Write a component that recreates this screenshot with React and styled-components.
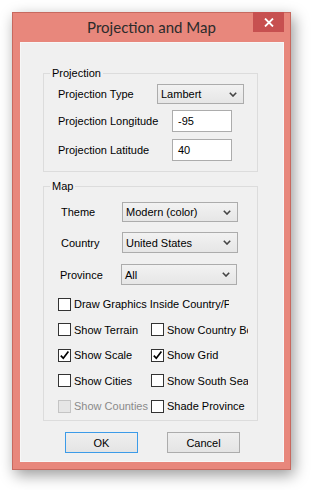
import React from "react";
import styled, { createGlobalStyle } from "styled-components";

const Global = createGlobalStyle`
  html, body { margin: 0; padding: 0; background: #ffffff; }
  body { font-family: "Liberation Sans", Arial, sans-serif; font-size: 11px; color: #000; }
  * { box-sizing: border-box; }
`;

const Page = styled.div`
  padding: 12px 0 0 12px;
  width: 311px;
  height: 490px;
`;

const Window = styled.div`
  width: 279px;
  height: 458px;
  border: 1px solid #c7695f;
  background: #e8877c;
  display: flex;
  flex-direction: column;
  box-shadow: 3px 5px 14px rgba(0, 0, 0, 0.4);
`;

const TitleBar = styled.div`
  height: 29px;
  display: grid;
  grid-template-columns: 37px 1fr 37px;
  align-items: start;
`;

const Title = styled.div`
  grid-column: 2;
  align-self: center;
  text-align: center;
  font-family: Lato, "Liberation Sans", sans-serif;
  font-size: 15px;
  color: #2b2b2b;
  margin-top: -1px;
`;

const CloseButton = styled.div`
  grid-column: 3;
  width: 31px;
  height: 20px;
  margin-top: -1px;
  background: #c75050;
  display: flex;
  align-items: center;
  justify-content: center;
`;

const Client = styled.div`
  margin: 0 6px 7px 7px;
  height: 420px;
  background: #f0f0f0;
  border: 1px solid #f7f7f7;
  padding: 30px 0 0 22px;
  display: flex;
  flex-direction: column;
`;

const Group = styled.div`
  position: relative;
  width: 215px;
  height: ${(p) => p.$h}px;
  margin-bottom: ${(p) => p.$mb || 0}px;
  border: 1px solid #dcdcdc;
  padding: ${(p) => p.$pt}px 0 0 14px;
  display: flex;
  flex-direction: column;
`;

const Legend = styled.span`
  position: absolute;
  top: -8px;
  left: 6px;
  padding: 0 2px;
  background: #f0f0f0;
  line-height: 14px;
`;

const Row = styled.div`
  display: flex;
  align-items: center;
  height: ${(p) => p.$h}px;
  margin-top: ${(p) => p.$mt || 0}px;
  padding-left: ${(p) => p.$indent || 0}px;
`;

const Label = styled.div`
  width: ${(p) => p.$w}px;
  flex: none;
  white-space: nowrap;
`;

const SelectBox = styled.div`
  width: ${(p) => p.$w}px;
  height: 100%;
  border: 1px solid #acacac;
  background: linear-gradient(#f2f2f2, #e6e6e6);
  display: flex;
  align-items: center;
  justify-content: space-between;
  padding: 0 6px 0 3px;
`;

const TextBox = styled.div`
  width: ${(p) => p.$w}px;
  height: 100%;
  border: 1px solid #acacac;
  background: #ffffff;
  display: flex;
  align-items: center;
  padding-left: 5px;
`;

const CheckGrid = styled.div`
  display: flex;
  flex-direction: column;
  gap: 9.5px;
  margin-top: 11px;
`;

const CheckLine = styled.div`
  display: flex;
  height: 16px;
`;

const CheckItem = styled.div`
  width: ${(p) => p.$w}px;
  flex: none;
  display: flex;
  align-items: center;
  gap: 3px;
  overflow: hidden;
  white-space: nowrap;
  color: ${(p) => (p.$disabled ? "#8a8a8a" : "#000")};
`;

const Box = styled.div`
  width: 13px;
  height: 13px;
  flex: none;
  border: 1px solid ${(p) => (p.$disabled ? "#c4c4c4" : "#333333")};
  background: ${(p) => (p.$disabled ? "#e6e6e6" : "#ffffff")};
  display: flex;
  align-items: center;
  justify-content: center;
`;

const ButtonRow = styled.div`
  display: flex;
  gap: 29px;
  padding-left: 22px;
`;

const Button = styled.div`
  width: 73px;
  height: 21px;
  border: 1px solid ${(p) => (p.$default ? "#3c9be8" : "#acacac")};
  background: linear-gradient(#efefef, #e4e4e4);
  display: flex;
  align-items: center;
  justify-content: center;
`;

const Chevron = () => (
  <svg width="8" height="5" viewBox="0 0 8 5">
    <path d="M0.8 0.8 L4 4 L7.2 0.8" fill="none" stroke="#444" strokeWidth="1.6" />
  </svg>
);

const Select = ({ w, children }) => (
  <SelectBox $w={w}>
    <span>{children}</span>
    <Chevron />
  </SelectBox>
);

const Check = ({ w, checked, disabled, children }) => (
  <CheckItem $w={w} $disabled={disabled}>
    <Box $disabled={disabled}>
      {checked && (
        <svg width="11" height="11" viewBox="0 0 11 11">
          <path d="M1.8 5.6 L4.3 8.3 L9.4 1.6" fill="none" stroke="#000" strokeWidth="1.7" />
        </svg>
      )}
    </Box>
    <span>{children}</span>
  </CheckItem>
);

export default function App() {
  return (
    <Page>
      <Global />
      <Window>
        <TitleBar>
          <Title>Projection and Map</Title>
          <CloseButton>
            <svg width="10" height="9" viewBox="0 0 10 9">
              <path d="M1 0.5 L9 8.5 M9 0.5 L1 8.5" stroke="#fff" strokeWidth="1.8" />
            </svg>
          </CloseButton>
        </TitleBar>
        <Client>
          <Group $h={99} $mb={14} $pt={10}>
            <Legend>Projection</Legend>
            <Row $h={20}>
              <Label $w={99}>Projection Type</Label>
              <Select w={87}>Lambert</Select>
            </Row>
            <Row $h={22} $mt={6}>
              <Label $w={114}>Projection Longitude</Label>
              <TextBox $w={60}>-95</TextBox>
            </Row>
            <Row $h={22} $mt={7}>
              <Label $w={114}>Projection Latitude</Label>
              <TextBox $w={60}>40</TextBox>
            </Row>
          </Group>
          <Group $h={235} $mb={11} $pt={15}>
            <Legend>Map</Legend>
            <Row $h={20} $indent={3}>
              <Label $w={61}>Theme</Label>
              <Select w={116}>Modern (color)</Select>
            </Row>
            <Row $h={21} $mt={10} $indent={3}>
              <Label $w={61}>Country</Label>
              <Select w={116}>United States</Select>
            </Row>
            <Row $h={21} $mt={11} $indent={2}>
              <Label $w={61}>Province</Label>
              <Select w={116}>All</Select>
            </Row>
            <CheckGrid>
              <CheckLine>
                <Check w={171}>Draw Graphics Inside Country/Province</Check>
              </CheckLine>
              <CheckLine>
                <Check w={93}>Show Terrain</Check>
                <Check w={97}>Show Country Borders</Check>
              </CheckLine>
              <CheckLine>
                <Check w={93} checked>Show Scale</Check>
                <Check w={97} checked>Show Grid</Check>
              </CheckLine>
              <CheckLine>
                <Check w={93}>Show Cities</Check>
                <Check w={97}>Show South Sea</Check>
              </CheckLine>
              <CheckLine>
                <Check w={93} disabled>Show Counties</Check>
                <Check w={97}>Shade Province</Check>
              </CheckLine>
            </CheckGrid>
          </Group>
          <ButtonRow>
            <Button $default>OK</Button>
            <Button>Cancel</Button>
          </ButtonRow>
        </Client>
      </Window>
    </Page>
  );
}
